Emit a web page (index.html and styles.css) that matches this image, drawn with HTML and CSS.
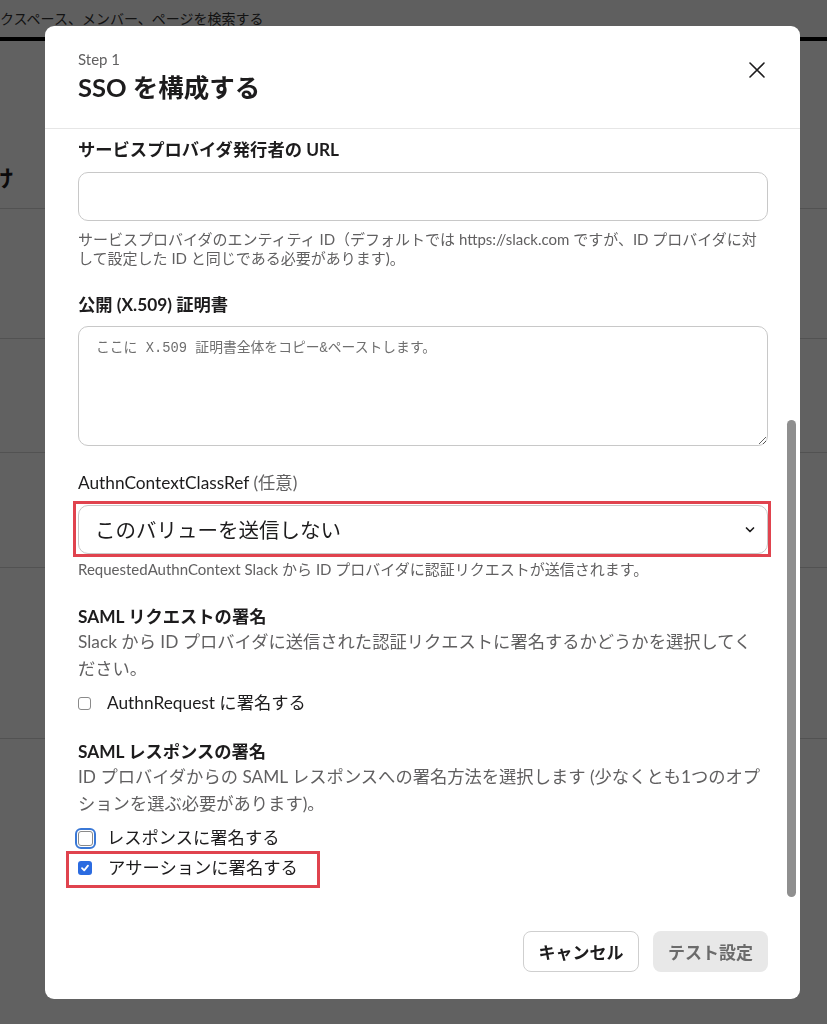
FILE: index.html
```html
<!DOCTYPE html>
<html lang="ja">
<head>
  <meta charset="UTF-8" />
  <meta name="viewport" content="width=device-width, initial-scale=1" />
  <title>SSO を構成する</title>
  <link rel="stylesheet" href="styles.css">
</head>
<body>
  <div class="page">
    <div class="topbar"><span class="search">ワークスペース、メンバー、ページを検索する</span></div>
    <div class="page-head"><h2>向け</h2></div>
    <div class="page-row r1"></div>
    <div class="page-row r2"></div>
    <div class="page-row r3"></div>
    <div class="page-row r4"></div>
    <div class="page-row r5"></div>
  </div>

  <div class="overlay">
    <div class="modal">
      <div class="modal-head">
        <div>
          <div class="step">Step 1</div>
          <h1 class="title">SSO を構成する</h1>
        </div>
        <button class="close-btn" aria-label="閉じる">
          <svg width="18" height="18" viewBox="0 0 18 18"><path d="M2 2 L16 16 M16 2 L2 16" stroke="#1d1c1d" stroke-width="1.6" fill="none" stroke-linecap="round"/></svg>
        </button>
      </div>

      <div class="modal-body">
        <div class="field">
          <label class="label">サービスプロバイダ発行者の URL</label>
          <input class="input" type="text">
          <p class="help">サービスプロバイダのエンティティ ID（デフォルトでは https://slack.com ですが、ID プロバイダに対して設定した ID と同じである必要があります)。</p>
        </div>

        <div class="field">
          <label class="label">公開 (X.509) 証明書</label>
          <textarea class="textarea" placeholder="ここに X.509 証明書全体をコピー&amp;ペーストします。"></textarea>
        </div>

        <div class="field field-select">
          <label class="label label-plain">AuthnContextClassRef <span class="muted">(任意)</span></label>
          <div class="select-mark">
            <div class="select-wrap">
              <select class="select">
                <option>このバリューを送信しない</option>
              </select>
              <svg class="chevron" width="12" height="8" viewBox="0 0 12 8"><path d="M2.5 2 L6 5.5 L9.5 2" stroke="#1d1c1d" stroke-width="1.7" fill="none" stroke-linecap="round" stroke-linejoin="round"/></svg>
            </div>
          </div>
          <p class="help help-tight">RequestedAuthnContext Slack から ID プロバイダに認証リクエストが送信されます。</p>
        </div>

        <div class="field">
          <div class="label">SAML リクエストの署名</div>
          <p class="desc">Slack から ID プロバイダに送信された認証リクエストに署名するかどうかを選択してください。</p>
          <div class="checks">
            <div class="check-row"><span class="box"></span>AuthnRequest に署名する</div>
          </div>
        </div>

        <div class="field">
          <div class="label">SAML レスポンスの署名</div>
          <p class="desc">ID プロバイダからの SAML レスポンスへの署名方法を選択します (少なくとも1つのオプションを選ぶ必要があります)。</p>
          <div class="checks">
            <div class="check-row"><span class="box box-focus"></span>レスポンスに署名する</div>
            <div class="check-row marked"><span class="box box-on">
              <svg width="10" height="10" viewBox="0 0 10 10"><path d="M2 5.2 L4.2 7.4 L8 2.6" stroke="#fff" stroke-width="1.8" fill="none" stroke-linecap="round" stroke-linejoin="round"/></svg>
            </span>アサーションに署名する</div>
          </div>
        </div>

        <div class="scroll-thumb"></div>
      </div>

      <div class="modal-foot">
        <button class="btn btn-cancel">キャンセル</button>
        <button class="btn btn-test">テスト設定</button>
      </div>
    </div>
  </div>
</body>
</html>
```

FILE: styles.css
```css
* { margin: 0; padding: 0; box-sizing: border-box; }
body, html {
  height: 100%;
  font-family: Lato, "Noto Sans CJK JP", sans-serif;
  color: #1d1c1d;
  background: #fff;
  overflow: hidden;
}

/* page behind the dialog */
.page { width: 100%; }
.topbar {
  height: 41px;
  border-bottom: 4px solid #000;
  padding-top: 8px;
  background: #fafafa;
  white-space: nowrap;
  overflow: hidden;
}
.search {
  display: inline-block;
  margin-left: -28px;
  font-size: 14px;
  line-height: 20px;
  color: #333;
}
.page-head {
  height: 167px;
  display: flex;
  align-items: flex-end;
  padding-bottom: 19px;
  overflow: hidden;
}
.page-head h2 {
  font-size: 22px;
  line-height: 22px;
  margin-left: -30px;
}
.page-row { border-top: 1px solid #d8d8d8; }
.r1 { height: 130px; }
.r2 { height: 114px; }
.r3 { height: 115px; }
.r4 { height: 171px; }
.r5 { height: 300px; }

/* dialog */
.overlay {
  position: fixed;
  top: 0; left: 0;
  width: 100%;
  height: 100%;
  background: rgba(0, 0, 0, 0.62);
  padding: 26px 27px 25px 45px;
}
.modal {
  width: 755px;
  height: 973px;
  background: #fff;
  border-radius: 9px;
  display: flex;
  flex-direction: column;
  overflow: hidden;
}
.modal-head {
  display: flex;
  justify-content: space-between;
  padding: 23px 33px 0;
  height: 103px;
  border-bottom: 1px solid #e6e6e6;
  flex-shrink: 0;
}
.step {
  font-size: 15px;
  line-height: 20px;
  color: #616061;
}
.title {
  margin-top: 3px;
  font-size: 25.5px;
  line-height: 31px;
  font-weight: 700;
}
.close-btn {
  background: none;
  border: none;
  width: 18px;
  height: 18px;
  margin-top: 12px;
  margin-right: 1px;
  cursor: pointer;
}

.modal-body {
  flex: 1;
  position: relative;
  padding: 10px 32px 0 33px;
  overflow: hidden;
}
.field { margin-bottom: 26px; }
.field-select { margin-bottom: 27px; }
.label {
  display: block;
  font-size: 17.3px;
  line-height: 22px;
  font-weight: 700;
}
.label-plain { font-weight: 400; }
.muted { color: #616061; }
.input,
.textarea,
.select {
  display: block;
  width: 100%;
  border: 1px solid #c8c8c8;
  border-radius: 10px;
  background: #fff;
  font-family: inherit;
  color: #1d1c1d;
}
.input {
  height: 49px;
  margin-top: 11px;
}
.help {
  margin-top: 9px;
  font-size: 15px;
  line-height: 19px;
  color: #616061;
}
.help-tight { margin-top: 3px; }
.textarea {
  height: 120px;
  margin-top: 10px;
  padding: 13px 17px;
  font-family: "Liberation Mono", "Noto Sans CJK JP", monospace;
  font-size: 13.8px;
  line-height: 18px;
  resize: vertical;
}
.textarea::placeholder { color: #6e6e6e; }
.select-mark {
  margin: 7px -3px 0 -5px;
  padding: 1px 0 0 2px;
  border: 3px solid #e0434e;
}
.select-wrap { position: relative; }
.select {
  appearance: none;
  height: 49px;
  padding: 0 16px;
  font-size: 20.5px;
  outline: none;
}
.chevron {
  position: absolute;
  right: 12px;
  top: 21px;
}
.desc {
  font-size: 17.3px;
  line-height: 27px;
  color: #616061;
}
.checks {
  margin-top: 9px;
  display: flex;
  flex-direction: column;
  align-items: flex-start;
}
.check-row {
  display: flex;
  align-items: center;
  gap: 16px;
  font-size: 17.3px;
  line-height: 24px;
  white-space: nowrap;
}
.box {
  width: 13px;
  height: 13px;
  border: 1px solid #8a8a8a;
  border-radius: 3px;
  display: flex;
  align-items: center;
  justify-content: center;
  flex-shrink: 0;
}
.box-focus {
  width: 15px;
  height: 15px;
  margin-right: -2px;
  outline: 2px solid #3a78d6;
  outline-offset: 1px;
}
.box-on {
  width: 14px;
  height: 14px;
  border: none;
  background: #2b6be0;
}
.marked {
  margin: 1px 0 0 -12px;
  padding: 2px 19px 5px 9px;
  border: 3px solid #e0434e;
}
.scroll-thumb {
  position: absolute;
  right: 4px;
  top: 291px;
  width: 9px;
  height: 477px;
  border-radius: 5px;
  background: #8f8f8f;
}

.modal-foot {
  display: flex;
  justify-content: flex-end;
  gap: 14px;
  padding: 26px 32px 27px;
  flex-shrink: 0;
}
.btn {
  height: 41px;
  padding: 0;
  border-radius: 8px;
  font-family: inherit;
  font-size: 17px;
  font-weight: 700;
  white-space: nowrap;
  cursor: pointer;
}
.btn-cancel {
  width: 116px;
  background: #fff;
  border: 1px solid #cfcfcf;
  color: #1d1c1d;
}
.btn-test {
  width: 115px;
  background: #e8e8e8;
  border: none;
  color: #6b6b6b;
}
```
